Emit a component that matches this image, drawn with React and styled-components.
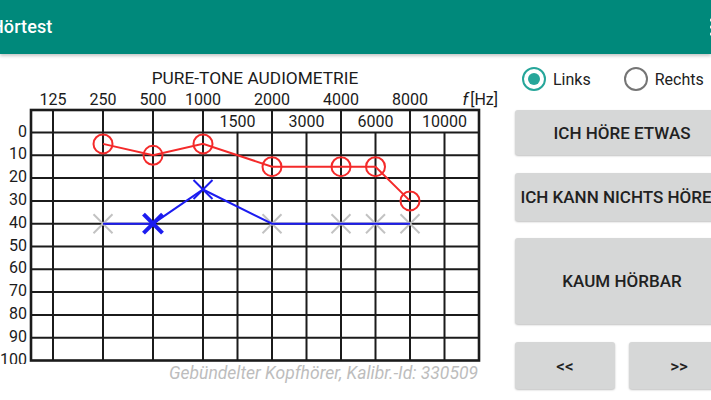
import React, { useState } from "react";
import styled, { createGlobalStyle } from "styled-components";

const GlobalStyle = createGlobalStyle`
  html, body {
    margin: 0;
    padding: 0;
    background: #ffffff;
    overflow: hidden;
    font-family: Roboto, "Noto Sans", Arial, sans-serif;
  }
`;

const Page = styled.div`
  width: 711px;
  height: 400px;
  overflow: hidden;
  display: flex;
  flex-direction: column;
  background: #fff;
`;

const AppBar = styled.header`
  height: 54px;
  flex-shrink: 0;
  background: #00897b;
  display: flex;
  align-items: center;
  justify-content: space-between;
  box-shadow: 0 2px 3px rgba(0, 0, 0, 0.22);
  position: relative;
  z-index: 1;
`;

const Title = styled.h1`
  margin: 0 0 2px -9px;
  color: #fff;
  font-size: 18px;
  font-weight: 500;
  letter-spacing: 0.1px;
`;

const MenuDots = styled.div`
  display: flex;
  flex-direction: column;
  gap: 3px;
  margin-right: -3px;
  span {
    width: 4px;
    height: 4px;
    border-radius: 50%;
    background: #fff;
  }
`;

const Main = styled.main`
  flex: 1;
  display: flex;
  overflow: hidden;
`;

const ChartColumn = styled.section`
  width: 505px;
  flex-shrink: 0;
  padding-top: 6px;
  display: flex;
  flex-direction: column;
`;

const Caption = styled.div`
  padding-right: 27px;
  text-align: right;
  font-size: 17.5px;
  line-height: 18px;
  font-style: italic;
  color: #bdbdbd;
  white-space: nowrap;
`;

const Controls = styled.aside`
  width: 214px;
  flex-shrink: 0;
  margin-left: 10px;
  padding-top: 9px;
  display: flex;
  flex-direction: column;
`;

const RadioRow = styled.div`
  display: flex;
  align-items: center;
  gap: 33px;
  height: 32px;
  padding-left: 7px;
  margin-bottom: 15px;
`;

const RadioLabel = styled.label`
  display: flex;
  align-items: center;
  gap: 7px;
  font-size: 16px;
  color: #212121;
  cursor: pointer;
`;

const RadioCircle = styled.span`
  width: 20px;
  height: 20px;
  border-radius: 50%;
  border: 2px solid ${(p) => (p.$checked ? "#26a69a" : "#757575")};
  display: flex;
  align-items: center;
  justify-content: center;
  &::after {
    content: "";
    width: 12px;
    height: 12px;
    border-radius: 50%;
    background: ${(p) => (p.$checked ? "#26a69a" : "transparent")};
  }
`;

const Button = styled.button`
  height: ${(p) => p.$h}px;
  width: ${(p) => p.$w || 214}px;
  flex-shrink: 0;
  margin-bottom: ${(p) => p.$mb || 0}px;
  border: none;
  border-radius: 3px;
  background: #d6d7d7;
  box-shadow: 0 1px 2px rgba(0, 0, 0, 0.25);
  font-family: Roboto, Arial, sans-serif;
  font-size: 17px;
  font-weight: 500;
  color: #212121;
  text-transform: uppercase;
  white-space: nowrap;
  display: flex;
  align-items: center;
  justify-content: center;
  overflow: visible;
  padding: 0;
`;

const NavRow = styled.div`
  display: flex;
  gap: 14px;
`;

// chart geometry (page coordinates)
const FX = {
  125: 53,
  250: 103,
  500: 153,
  1000: 203,
  1500: 237.5,
  2000: 272,
  3000: 306.5,
  4000: 341,
  6000: 375.5,
  8000: 410,
  10000: 444.5,
};
const LEFT = 31;
const RIGHT = 479;
const TOP = 110;
const Y0 = 132.5;
const STEP = 2.28;
const yOf = (db) => Y0 + db * STEP;

const mainFreqs = [125, 250, 500, 1000, 2000, 4000, 8000];
const midFreqs = [1500, 3000, 6000, 10000];
const levels = [0, 10, 20, 30, 40, 50, 60, 70, 80, 90, 100];

const leftEar = [
  [250, 5],
  [500, 10],
  [1000, 5],
  [2000, 15],
  [4000, 15],
  [6000, 15],
  [8000, 30],
];

const rightEar = [
  [250, 40, "gray"],
  [500, 40, "bold"],
  [1000, 25, "blue"],
  [2000, 40, "gray"],
  [4000, 40, "gray"],
  [6000, 40, "gray"],
  [8000, 40, "gray"],
];

const RED = "#f42a2a";
const BLUE = "#1c1cf0";
const INK = "#1b1b1b";

const Cross = ({ x, y, kind }) => {
  const d = 9.5;
  const color = kind === "gray" ? "#c2c2c2" : BLUE;
  const w = kind === "bold" ? 4 : 2;
  return (
    <g stroke={color} strokeWidth={w} strokeLinecap="butt">
      <line x1={x - d} y1={y - d} x2={x + d} y2={y + d} />
      <line x1={x - d} y1={y + d} x2={x + d} y2={y - d} />
    </g>
  );
};

const Audiogram = () => {
  const toPts = (list) => list.map(([f, db]) => `${FX[f]},${yOf(db)}`).join(" ");
  return (
    <svg width="505" height="304" viewBox="0 60 505 304" fontFamily="Roboto, Arial, sans-serif">
      <text x="255" y="83.5" fontSize="17.3" textAnchor="middle" fill={INK}>
        PURE-TONE AUDIOMETRIE
      </text>
      {mainFreqs.map((f) => (
        <text key={f} x={FX[f]} y="105" fontSize="16" textAnchor="middle" fill={INK}>
          {f}
        </text>
      ))}
      <text x="498" y="105" fontSize="16" textAnchor="end" fill={INK}>
        <tspan fontStyle="italic" fontSize="17">f</tspan>
        <tspan dx="2">[Hz]</tspan>
      </text>
      {midFreqs.map((f) => (
        <text key={f} x={FX[f]} y="127" fontSize="16" textAnchor="middle" fill={INK}>
          {f}
        </text>
      ))}
      {levels.map((db) => (
        <text key={db} x="27" y={yOf(db) + 4} fontSize="16" textAnchor="end" fill={INK}>
          {db}
        </text>
      ))}

      <g stroke={INK} strokeWidth="2">
        {levels.slice(0, 10).map((db) => (
          <line key={db} x1={LEFT} x2={RIGHT} y1={yOf(db)} y2={yOf(db)} />
        ))}
        {mainFreqs.map((f) => (
          <line key={f} x1={FX[f]} x2={FX[f]} y1={TOP} y2={yOf(100)} />
        ))}
        {midFreqs.map((f) => (
          <line key={f} x1={FX[f]} x2={FX[f]} y1={Y0} y2={yOf(100)} />
        ))}
      </g>
      <rect
        x={LEFT}
        y={TOP}
        width={RIGHT - LEFT}
        height={yOf(100) - TOP}
        fill="none"
        stroke={INK}
        strokeWidth="2.6"
      />

      {rightEar
        .filter((p) => p[2] === "gray")
        .map(([f, db]) => (
          <Cross key={f} x={FX[f]} y={yOf(db)} kind="gray" />
        ))}
      <polyline points={toPts(rightEar)} fill="none" stroke={BLUE} strokeWidth="2" />
      {rightEar
        .filter((p) => p[2] !== "gray")
        .map(([f, db, kind]) => (
          <Cross key={f} x={FX[f]} y={yOf(db)} kind={kind} />
        ))}

      <polyline points={toPts(leftEar)} fill="none" stroke={RED} strokeWidth="2" />
      {leftEar.map(([f, db]) => (
        <circle key={f} cx={FX[f]} cy={yOf(db)} r="9.5" fill="none" stroke={RED} strokeWidth="2" />
      ))}
    </svg>
  );
};

export default function App() {
  const [ear, setEar] = useState("links");
  return (
    <Page>
      <GlobalStyle />
      <AppBar>
        <Title>Hörtest</Title>
        <MenuDots>
          <span />
          <span />
          <span />
        </MenuDots>
      </AppBar>
      <Main>
        <ChartColumn>
          <Audiogram />
          <Caption>Gebündelter Kopfhörer, Kalibr.-Id: 330509</Caption>
        </ChartColumn>
        <Controls>
          <RadioRow>
            <RadioLabel onClick={() => setEar("links")}>
              <RadioCircle $checked={ear === "links"} />
              Links
            </RadioLabel>
            <RadioLabel onClick={() => setEar("rechts")}>
              <RadioCircle $checked={ear === "rechts"} />
              Rechts
            </RadioLabel>
          </RadioRow>
          <Button $h={45} $mb={18}>Ich höre etwas</Button>
          <Button $h={48} $mb={17}>Ich kann nichts hören</Button>
          <Button $h={86} $mb={18}>Kaum hörbar</Button>
          <NavRow>
            <Button $h={47} $w={100}>&lt;&lt;</Button>
            <Button $h={47} $w={100}>&gt;&gt;</Button>
          </NavRow>
        </Controls>
      </Main>
    </Page>
  );
}
